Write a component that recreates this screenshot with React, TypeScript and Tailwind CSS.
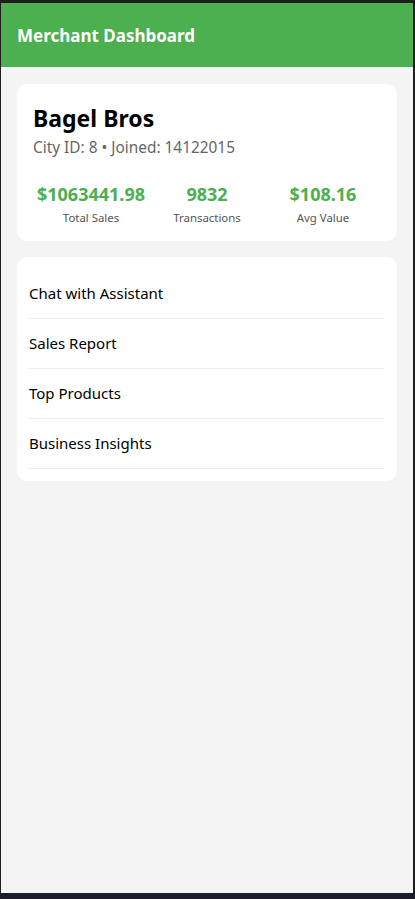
const stats = [
  { value: '$1063441.98', label: 'Total Sales' },
  { value: '9832', label: 'Transactions' },
  { value: '$108.16', label: 'Avg Value' },
];

const menu = ['Chat with Assistant', 'Sales Report', 'Top Products', 'Business Insights'];

export default function App() {
  return (
    <div
      className="h-[899px] w-[415px] bg-[#1a1d2a] flex flex-col"
      style={{ fontFamily: '"Noto Sans", "Open Sans", sans-serif' }}
    >
      <div className="h-[3px] bg-[#1e1e1e]" />
      <div className="flex-1 flex bg-[#1e1e1e]">
        <div className="w-px" />
        <div className="flex-1 bg-[#f4f4f4] flex flex-col">
          {/* Header */}
          <div className="h-[64px] bg-[#4caf50] flex items-center px-4">
            <h1 className="text-white font-bold text-[17px] mt-[2px]">Merchant Dashboard</h1>
          </div>

          <div className="px-4 pt-[17px] flex flex-col gap-4">
            {/* Merchant card */}
            <div className="bg-white rounded-[10px] px-4 pt-[18px] pb-[15px]">
              <h2 className="text-[23px] font-bold text-black leading-[32px]">Bagel Bros</h2>
              <p className="text-[15.4px] text-[#666] leading-[24px] mt-[2px]">City ID: 8 • Joined: 14122015</p>
              <div className="grid grid-cols-3 mt-[21px]">
                {stats.map((s) => (
                  <div key={s.label} className="text-center">
                    <div className="text-[18px] font-bold text-[#4caf50] leading-[26px]">{s.value}</div>
                    <div className="text-[11.4px] text-[#555] leading-[16px] mt-[3px]">{s.label}</div>
                  </div>
                ))}
              </div>
            </div>

            {/* Menu */}
            <div className="bg-white rounded-[10px] px-3 py-3">
              {menu.map((m) => (
                <div
                  key={m}
                  className="h-[50px] flex items-center border-b border-[#eee] text-[15px] text-black"
                >
                  {m}
                </div>
              ))}
            </div>
          </div>
        </div>
        <div className="w-[2px]" />
      </div>
      <div className="h-[6px]" />
    </div>
  );
}
